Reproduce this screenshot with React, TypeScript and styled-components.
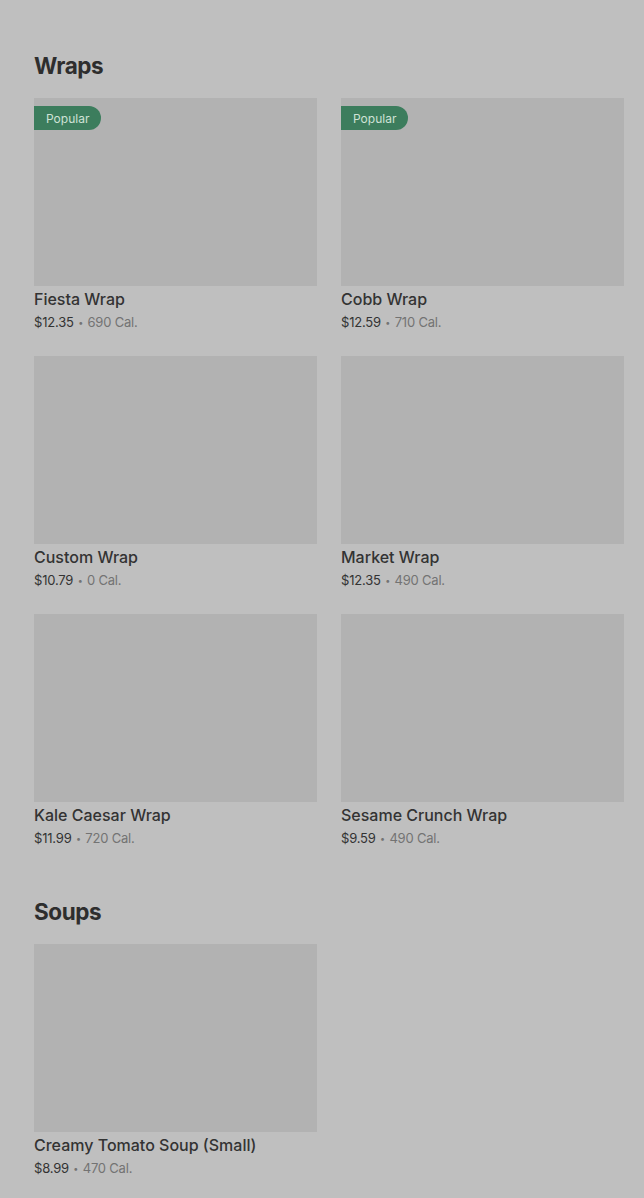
import React from "react";
import styled, { createGlobalStyle } from "styled-components";

const Global = createGlobalStyle`
  html, body { margin: 0; padding: 0; background: #bfbfbf; }
  body { font-family: Inter, "Open Sans", Arial, sans-serif; -webkit-font-smoothing: antialiased; }
`;

const Page = styled.div`
  padding: 50px 20px 18px 34px;
  display: flex;
  flex-direction: column;
  gap: 46px;
`;

const Section = styled.section`
  display: flex;
  flex-direction: column;
`;

const Heading = styled.h2`
  margin: 0 0 16px;
  font-size: 22.5px;
  line-height: 32px;
  font-weight: 700;
  color: #2e2e2e;
  letter-spacing: -0.4px;
`;

const Grid = styled.div`
  display: grid;
  grid-template-columns: 283px 283px;
  column-gap: 24px;
  row-gap: 22px;
`;

const Card = styled.div`
  display: flex;
  flex-direction: column;
`;

const ImageBox = styled.div`
  position: relative;
  height: 188px;
  background: #b2b2b2;
`;

const Badge = styled.span`
  position: absolute;
  left: 0;
  top: 8px;
  height: 24px;
  padding: 0 12px;
  display: flex;
  align-items: center;
  background: #3c7d5d;
  color: #cfe2d6;
  font-size: 12px;
  border-radius: 0 12px 12px 0;
`;

const Title = styled.div`
  margin-top: 2px;
  height: 22px;
  font-size: 16px;
  line-height: 22px;
  font-weight: 500;
  color: #333333;
`;

const Meta = styled.div`
  height: 24px;
  font-size: 13px;
  line-height: 24px;
  letter-spacing: -0.2px;
  color: #333333;
  white-space: nowrap;
`;

const Cal = styled.span`
  color: #737373;
`;

const Dot = styled.span`
  display: inline-block;
  font-size: 9px;
  line-height: 10px;
  vertical-align: 1px;
  margin: 0 1px;
`;

type Item = { name: string; price: string; cal: string; popular?: boolean };

const wraps: Item[] = [
  { name: "Fiesta Wrap", price: "$12.35", cal: "690 Cal.", popular: true },
  { name: "Cobb Wrap", price: "$12.59", cal: "710 Cal.", popular: true },
  { name: "Custom Wrap", price: "$10.79", cal: "0 Cal." },
  { name: "Market Wrap", price: "$12.35", cal: "490 Cal." },
  { name: "Kale Caesar Wrap", price: "$11.99", cal: "720 Cal." },
  { name: "Sesame Crunch Wrap", price: "$9.59", cal: "490 Cal." },
];

const soups: Item[] = [
  { name: "Creamy Tomato Soup (Small)", price: "$8.99", cal: "470 Cal." },
];

const ItemCard = ({ item }: { item: Item }) => (
  <Card>
    <ImageBox>{item.popular && <Badge>Popular</Badge>}</ImageBox>
    <Title>{item.name}</Title>
    <Meta>
      {item.price}
      <Cal>
        {" "}
        <Dot>•</Dot> {item.cal}
      </Cal>
    </Meta>
  </Card>
);

export default function App() {
  return (
    <>
      <Global />
      <Page>
        <Section>
          <Heading>Wraps</Heading>
          <Grid>
            {wraps.map((w) => (
              <ItemCard key={w.name} item={w} />
            ))}
          </Grid>
        </Section>
        <Section>
          <Heading>Soups</Heading>
          <Grid>
            {soups.map((w) => (
              <ItemCard key={w.name} item={w} />
            ))}
          </Grid>
        </Section>
      </Page>
    </>
  );
}
